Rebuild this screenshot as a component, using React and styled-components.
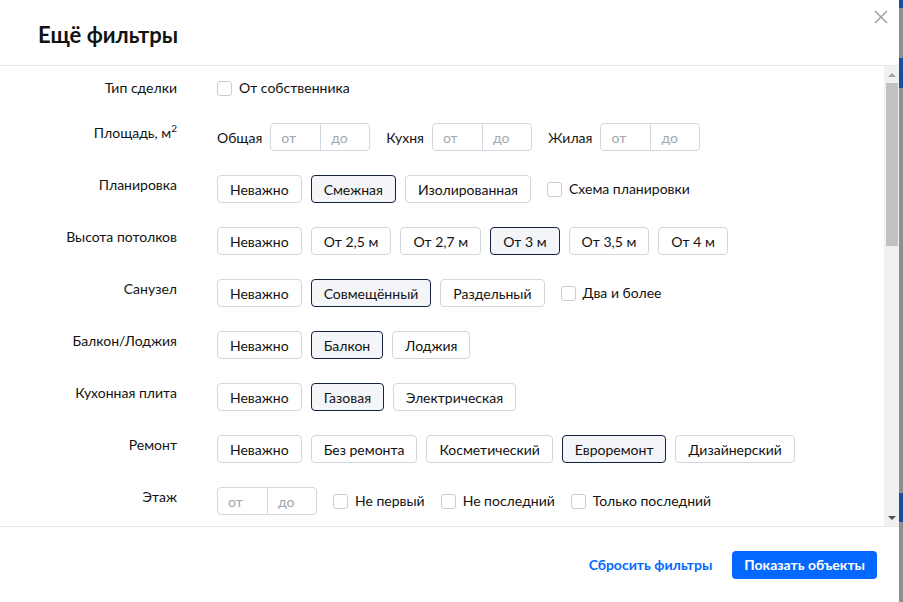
import React from "react";
import styled, { createGlobalStyle } from "styled-components";

const GlobalStyle = createGlobalStyle`
	html, body {
		margin: 0;
		padding: 0;
		height: 100%;
		overflow: hidden;
	}
	body {
		font-family: Lato, "Noto Sans", sans-serif;
		color: #121212;
		background: #8e8e8e;
	}
	* {
		box-sizing: border-box;
	}
`;

const Page = styled.div`
	display: flex;
	width: 903px;
	height: 602px;
`;

const Modal = styled.div`
	width: 899px;
	height: 602px;
	background: #fff;
	display: flex;
	flex-direction: column;
`;

const Backdrop = styled.div`
	flex: 1;
	background: linear-gradient(
		to bottom,
		#1b4d9c 0px,
		#1b4d9c 8px,
		#8e8e8e 8px,
		#8e8e8e 58px,
		#1b4d9c 58px,
		#1b4d9c 88px,
		#8e8e8e 88px,
		#8e8e8e 493px,
		#1b4d9c 493px,
		#1b4d9c 522px,
		#8e8e8e 522px
	);
`;

const Header = styled.div`
	height: 66px;
	flex: none;
	display: flex;
	align-items: flex-start;
	padding: 0 11px 0 38px;
	border-bottom: 1px solid #e6e6e6;
`;

const Title = styled.h2`
	margin: 21px 0 0;
	font-size: 22px;
	line-height: 28px;
	font-weight: 700;
	color: #121212;
`;

const CloseButton = styled.button`
	margin: 10px 0 0 auto;
	padding: 0;
	width: 14px;
	height: 14px;
	border: none;
	background: none;
	cursor: pointer;
	display: flex;
`;

const Body = styled.div`
	flex: 1;
	min-height: 0;
	display: flex;
`;

const Content = styled.div`
	flex: 1;
	overflow: hidden;
	padding-top: 12px;
`;

const ScrollTrack = styled.div`
	width: 15px;
	flex: none;
	background: #f1f1f1;
	display: flex;
	flex-direction: column;
`;

const ScrollArrow = styled.div`
	height: 17px;
	flex: none;
	display: flex;
	align-items: center;
	justify-content: center;
	margin-top: ${(p) => (p.$down ? "auto" : 0)};
	&::before {
		content: "";
		border-left: 4px solid transparent;
		border-right: 4px solid transparent;
		${(p) =>
			p.$down
				? "border-top: 4px solid #505050;"
				: "border-bottom: 4px solid #a3a3a3;"}
	}
`;

const ScrollThumb = styled.div`
	height: 163px;
	margin: 0 1px 0 2px;
	background: #c1c1c1;
`;

const FilterRow = styled.div`
	display: grid;
	grid-template-columns: 177px 1fr;
	column-gap: 40px;
	align-items: start;
	margin-bottom: ${(p) => p.$space || 24}px;
`;

const Label = styled.div`
	font-size: 14px;
	line-height: 20px;
	text-align: right;
	white-space: nowrap;
	sup {
		font-size: 10px;
		line-height: 0;
	}
`;

const Controls = styled.div`
	display: flex;
	align-items: center;
	gap: 9px;
	min-height: ${(p) => (p.$compact ? 20 : 28)}px;
`;

const OptionButton = styled.button`
	height: 28px;
	padding: 0 12px;
	font-family: inherit;
	font-size: 14px;
	color: #121212;
	border-radius: 4px;
	border: 1px solid ${(p) => (p.$active ? "#152242" : "#d3d7de")};
	background: ${(p) => (p.$active ? "#f3f5f8" : "#fff")};
	white-space: nowrap;
	cursor: pointer;
`;

const Check = styled.label`
	display: flex;
	align-items: center;
	gap: 7px;
	font-size: 14px;
	line-height: 20px;
	white-space: nowrap;
	margin-left: ${(p) => (p.$first ? 0 : 7)}px;
	cursor: pointer;
`;

const Box = styled.span`
	width: 15px;
	height: 15px;
	border: 1px solid #c9cdd3;
	border-radius: 3px;
	background: #fff;
	flex: none;
`;

const Field = styled.div`
	display: flex;
	align-items: center;
	gap: 8px;
	& + & {
		margin-left: 7px;
	}
`;

const Caption = styled.span`
	font-size: 14px;
	color: #121212;
`;

const Range = styled.div`
	display: flex;
	width: 100px;
	height: 28px;
	border: 1px solid #d3d7de;
	border-radius: 4px;
	overflow: hidden;
`;

const RangeInput = styled.input`
	width: 50%;
	border: none;
	outline: none;
	padding: 0 0 0 10px;
	font-family: inherit;
	font-size: 14px;
	color: #121212;
	background: transparent;
	& + & {
		border-left: 1px solid #d3d7de;
	}
	&::placeholder {
		color: #a2a7af;
	}
`;

const Footer = styled.div`
	height: 76px;
	flex: none;
	border-top: 1px solid #e6e6e6;
	display: flex;
	align-items: center;
	justify-content: flex-end;
	gap: 20px;
	padding: 0 22px 0 0;
`;

const ResetLink = styled.button`
	border: none;
	background: none;
	padding: 0;
	font-family: inherit;
	font-size: 14px;
	font-weight: 700;
	color: #0468ff;
	cursor: pointer;
`;

const SubmitButton = styled.button`
	height: 28px;
	padding: 0 12px;
	border: none;
	border-radius: 4px;
	background: #0468ff;
	color: #fff;
	font-family: inherit;
	font-size: 14px;
	font-weight: 700;
	cursor: pointer;
`;

const RangeBox = () => (
	<Range>
		<RangeInput placeholder="от" />
		<RangeInput placeholder="до" />
	</Range>
);

const Options = ({ items, active }) =>
	items.map((item) => (
		<OptionButton key={item} $active={item === active}>
			{item}
		</OptionButton>
	));

const CheckItem = ({ children, first }) => (
	<Check $first={first}>
		<Box />
		{children}
	</Check>
);

export default function App() {
	return (
		<>
			<GlobalStyle />
			<Page>
				<Modal>
					<Header>
						<Title>Ещё фильтры</Title>
						<CloseButton aria-label="Закрыть">
							<svg width="14" height="14" viewBox="0 0 14 14">
								<path d="M1 1L13 13M13 1L1 13" stroke="#9aa1ab" strokeWidth="1.5" />
							</svg>
						</CloseButton>
					</Header>
					<Body>
						<Content>
							<FilterRow $space={25}>
								<Label>Тип сделки</Label>
								<Controls $compact>
									<CheckItem first>От собственника</CheckItem>
								</Controls>
							</FilterRow>
							<FilterRow>
								<Label>
									Площадь, м<sup>2</sup>
								</Label>
								<Controls>
									<Field>
										<Caption>Общая</Caption>
										<RangeBox />
									</Field>
									<Field>
										<Caption>Кухня</Caption>
										<RangeBox />
									</Field>
									<Field>
										<Caption>Жилая</Caption>
										<RangeBox />
									</Field>
								</Controls>
							</FilterRow>
							<FilterRow>
								<Label>Планировка</Label>
								<Controls>
									<Options items={["Неважно", "Смежная", "Изолированная"]} active="Смежная" />
									<CheckItem>Схема планировки</CheckItem>
								</Controls>
							</FilterRow>
							<FilterRow>
								<Label>Высота потолков</Label>
								<Controls>
									<Options
										items={["Неважно", "От 2,5 м", "От 2,7 м", "От 3 м", "От 3,5 м", "От 4 м"]}
										active="От 3 м"
									/>
								</Controls>
							</FilterRow>
							<FilterRow>
								<Label>Санузел</Label>
								<Controls>
									<Options items={["Неважно", "Совмещённый", "Раздельный"]} active="Совмещённый" />
									<CheckItem>Два и более</CheckItem>
								</Controls>
							</FilterRow>
							<FilterRow>
								<Label>Балкон/Лоджия</Label>
								<Controls>
									<Options items={["Неважно", "Балкон", "Лоджия"]} active="Балкон" />
								</Controls>
							</FilterRow>
							<FilterRow>
								<Label>Кухонная плита</Label>
								<Controls>
									<Options items={["Неважно", "Газовая", "Электрическая"]} active="Газовая" />
								</Controls>
							</FilterRow>
							<FilterRow>
								<Label>Ремонт</Label>
								<Controls>
									<Options
										items={["Неважно", "Без ремонта", "Косметический", "Евроремонт", "Дизайнерский"]}
										active="Евроремонт"
									/>
								</Controls>
							</FilterRow>
							<FilterRow $space={0}>
								<Label>Этаж</Label>
								<Controls>
									<RangeBox />
									<CheckItem>Не первый</CheckItem>
									<CheckItem>Не последний</CheckItem>
									<CheckItem>Только последний</CheckItem>
								</Controls>
							</FilterRow>
						</Content>
						<ScrollTrack>
							<ScrollArrow />
							<ScrollThumb />
							<ScrollArrow $down />
						</ScrollTrack>
					</Body>
					<Footer>
						<ResetLink>Сбросить фильтры</ResetLink>
						<SubmitButton>Показать объекты</SubmitButton>
					</Footer>
				</Modal>
				<Backdrop />
			</Page>
		</>
	);
}
